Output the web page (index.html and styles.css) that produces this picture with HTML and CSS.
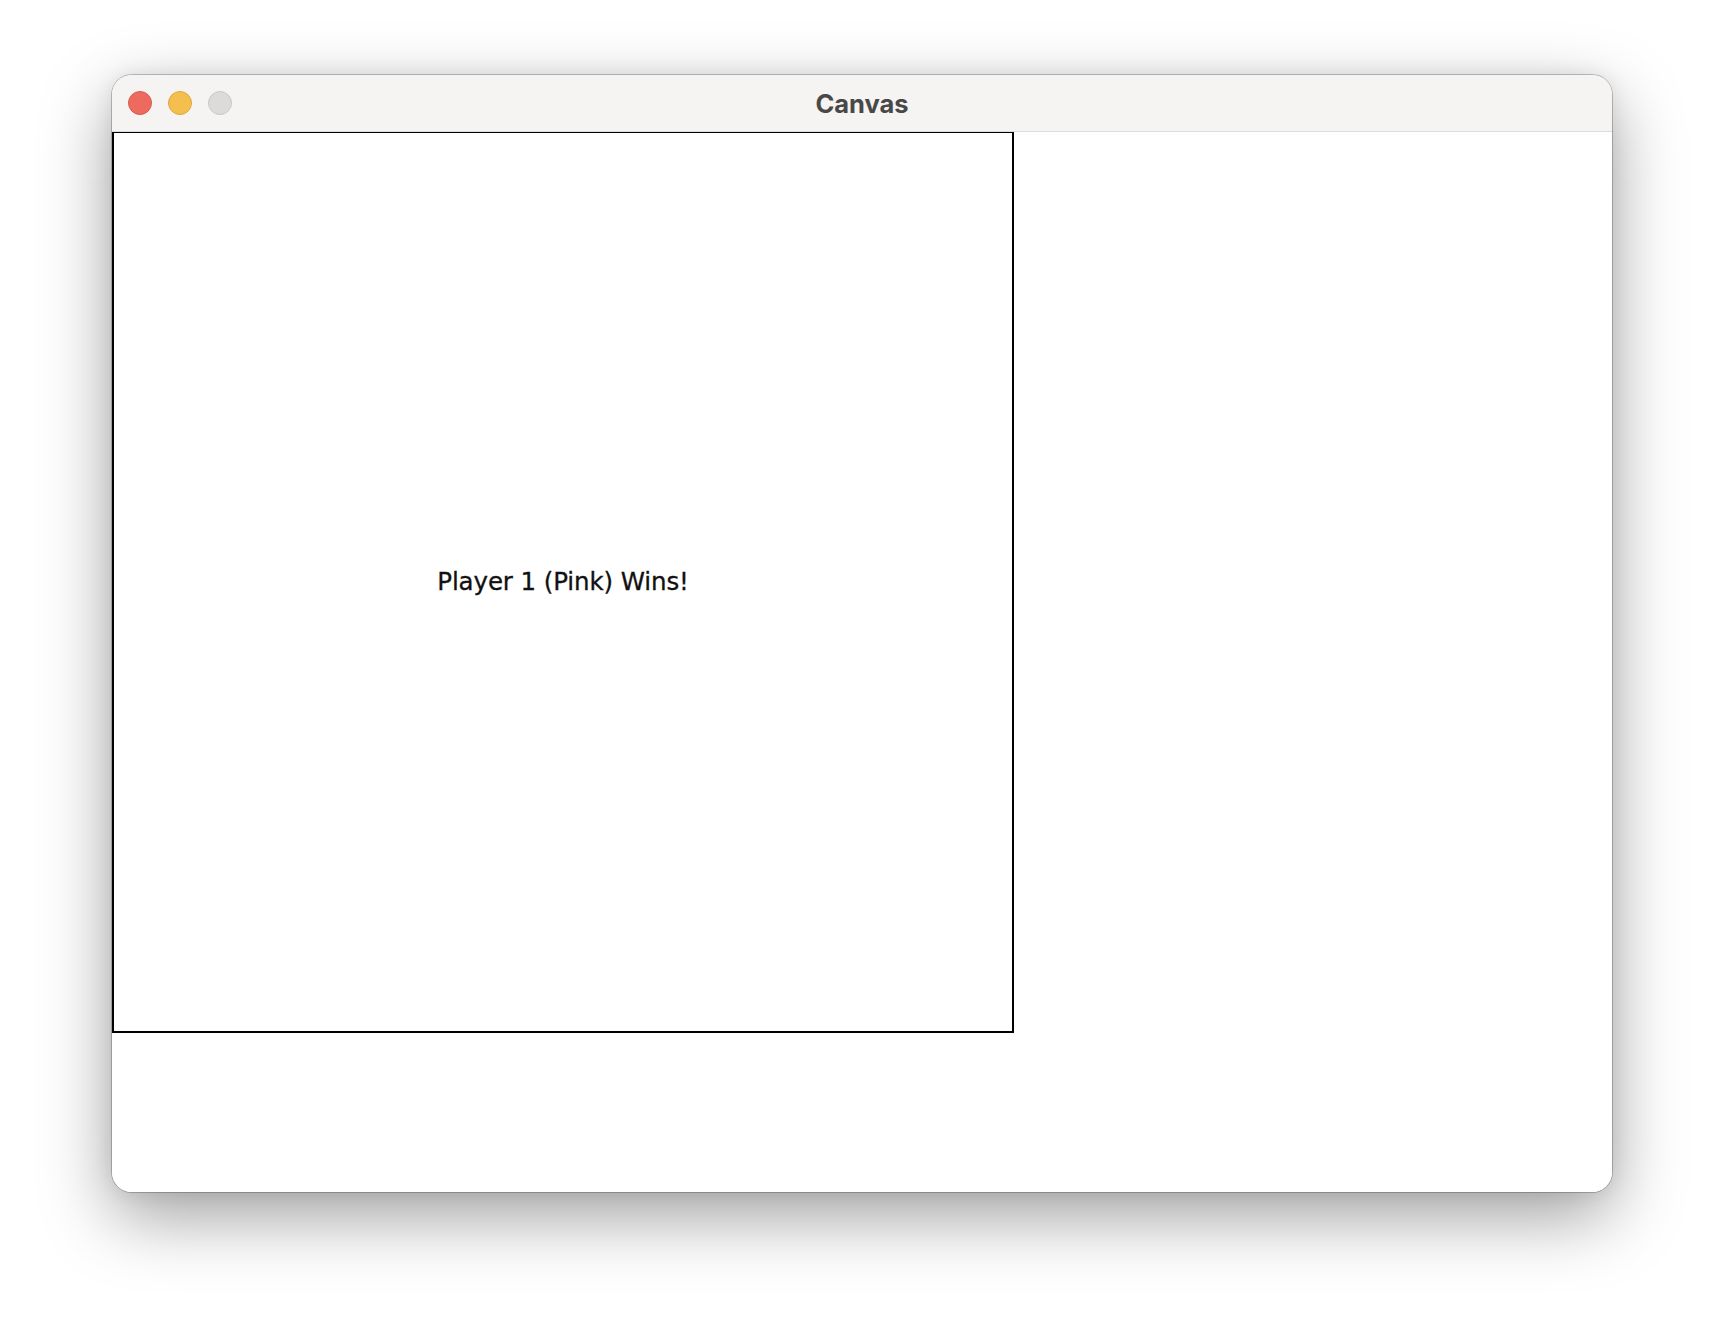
FILE: index.html
```html
<!DOCTYPE html>
<html>
<head>
<meta charset="utf-8">
<link rel="stylesheet" href="styles.css">
</head>
<body>
<div class="window">
  <div class="titlebar">
    <div class="lights">
      <span class="light red"></span>
      <span class="light yellow"></span>
      <span class="light gray"></span>
    </div>
    <div class="title">Canvas</div>
  </div>
  <div class="content">
    <div class="board">
      <div class="message">Player 1 (Pink) Wins!</div>
    </div>
  </div>
</div>
</body>
</html>
```
FILE: styles.css
```css
html, body {
  margin: 0;
  padding: 0;
  background: #ffffff;
  width: 1724px;
  height: 1340px;
  overflow: hidden;
}
body {
  padding: 75px 0 0 112px;
  box-sizing: border-box;
}
.window {
  width: 1500px;
  height: 1117px;
  border-radius: 20px;
  background: #ffffff;
  overflow: hidden;
  box-shadow: 0 0 0 1px rgba(0,0,0,0.22), 0 24px 70px rgba(0,0,0,0.38), 0 0 20px rgba(0,0,0,0.08);
  display: flex;
  flex-direction: column;
}
.titlebar {
  height: 56px;
  flex: 0 0 56px;
  background: #f5f4f2;
  border-bottom: 1px solid #dcdcdc;
  display: flex;
  align-items: center;
  position: relative;
}
.lights {
  display: flex;
  gap: 16px;
  padding-left: 16px;
}
.light {
  width: 24px;
  height: 24px;
  border-radius: 50%;
  box-sizing: border-box;
  display: block;
}
.red { background: #ed6a5e; border: 1px solid #d65a4f; }
.yellow { background: #f5bf4f; border: 1px solid #dca83e; }
.gray { background: #dcdbd9; border: 1px solid #c8c7c5; }
.title {
  position: absolute;
  left: 0;
  right: 0;
  top: 0;
  bottom: 0;
  display: flex;
  align-items: center;
  justify-content: center;
  font-family: "Inter", "Liberation Sans", sans-serif;
  font-weight: 700;
  font-size: 25.5px;
  color: #484848;
}
.content {
  flex: 1;
  background: #ffffff;
}
.board {
  width: 902px;
  height: 902px;
  box-sizing: border-box;
  border: 2px solid #000000;
  display: flex;
  align-items: center;
  justify-content: center;
  margin-top: -1px;
}
.message {
  font-family: "DejaVu Sans", sans-serif;
  font-size: 24.5px;
  color: #111111;
  margin-top: -2px;
  letter-spacing: -0.1px;
  -webkit-text-stroke: 0.3px #111111;
}
```
